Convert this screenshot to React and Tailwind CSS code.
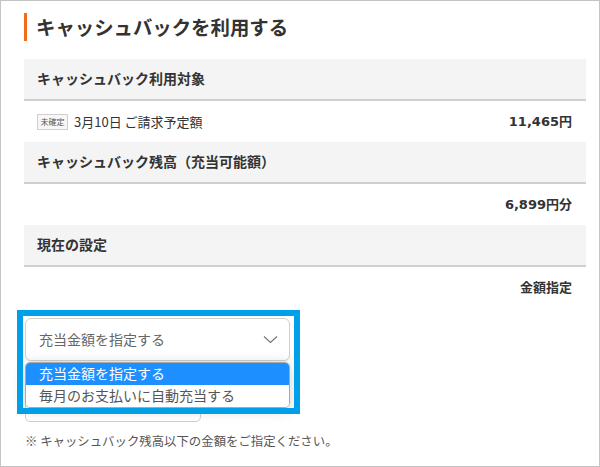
import React from "react";

export default function App() {
  return (
    <div className="relative w-[600px] h-[467px] border border-[#c4c4c4] bg-white overflow-hidden text-[#333] [font-family:'DejaVu_Sans','Noto_Sans_CJK_JP',sans-serif]">
      <div className="pl-[23px] pr-[13px] pt-[12px]">
        <div className="flex items-center h-[28px] border-l-[3px] border-[#f26b1d] pl-[9px]">
          <h1 className="text-[19.4px] font-bold leading-none text-[#333] [font-family:'Noto_Sans_CJK_JP',sans-serif]">キャッシュバックを利用する</h1>
        </div>

        <div className="mt-[18px]">
          <div className="h-[42px] bg-[#f4f4f4] border-b-2 border-[#cfcfcf] flex items-center pl-[13px] text-[14px] font-bold">
            キャッシュバック利用対象
          </div>
          <div className="h-[41px] flex items-center justify-between pl-[13px] pr-[14px]">
            <div className="flex items-center gap-[6px]">
              <span className="h-[16px] w-[31px] border border-[#cfcfcf] bg-[#f7f7f7] text-[8px] leading-[14px] text-center text-[#555] [font-family:'Noto_Sans_CJK_JP',sans-serif]">未確定</span>
              <span className="text-[13px] text-[#333] [font-family:'Noto_Sans_CJK_JP',sans-serif]">3月10日 ご請求予定額</span>
            </div>
            <span className="text-[13px] font-bold">11,465円</span>
          </div>

          <div className="h-[42px] bg-[#f4f4f4] border-b-2 border-[#cfcfcf] flex items-center pl-[13px] text-[14px] font-bold">
            キャッシュバック残高（充当可能額）
          </div>
          <div className="h-[41px] flex items-center justify-end pr-[14px]">
            <span className="text-[13px] font-bold">6,899円分</span>
          </div>

          <div className="h-[42px] bg-[#f4f4f4] border-b-2 border-[#cfcfcf] flex items-center pl-[13px] text-[14px] font-bold">
            現在の設定
          </div>
          <div className="h-[41px] flex items-center justify-end pr-[14px]">
            <span className="text-[13px] font-bold">金額指定</span>
          </div>
        </div>

        <div className="mt-[10px] pl-[1px]">
          <div className="w-[265px] h-[43px] border border-[#d0d0d0] rounded-[6px] bg-white flex items-center justify-between pl-[13px] pr-[11px] shadow-[0_1px_2px_rgba(0,0,0,0.06)]">
            <span className="text-[14px] text-[#666] [font-family:'Noto_Sans_CJK_JP',sans-serif]">充当金額を指定する</span>
            <svg width="15" height="9" viewBox="0 0 15 9" fill="none">
              <path d="M1 1.5 L7.5 7.5 L14 1.5" stroke="#777" strokeWidth="1.2" />
            </svg>
          </div>
          <div className="mt-[7px] w-[176px] h-[54px] border border-[#cfcfcf] rounded-[5px] bg-white"></div>
          <p className="mt-[10px] text-[12.4px] leading-[18px] text-[#555] [font-family:'Noto_Sans_CJK_JP',sans-serif]">
            ※ キャッシュバック残高以下の金額をご指定ください。
          </p>
        </div>
      </div>

      {/* dropdown list overlay */}
      <div className="absolute left-[24px] top-[361px] w-[265px] h-[46px] rounded-[5px] border border-[#a9a9a9] bg-white overflow-hidden shadow-[0_2px_14px_rgba(0,0,0,0.18)] [font-family:'Noto_Sans_CJK_JP',sans-serif]">
        <div className="h-[22px] bg-[#1e8fff] text-white text-[14px] leading-[21px] pl-[13px]">充当金額を指定する</div>
        <div className="h-[22px] bg-white text-[#555] text-[14px] leading-[21px] pl-[13px]">毎月のお支払いに自動充当する</div>
      </div>

      {/* annotation frame */}
      <div className="absolute left-[16px] top-[309px] w-[283px] h-[104px] border-[6px] border-[#00a0e9] pointer-events-none"></div>
    </div>
  );
}
